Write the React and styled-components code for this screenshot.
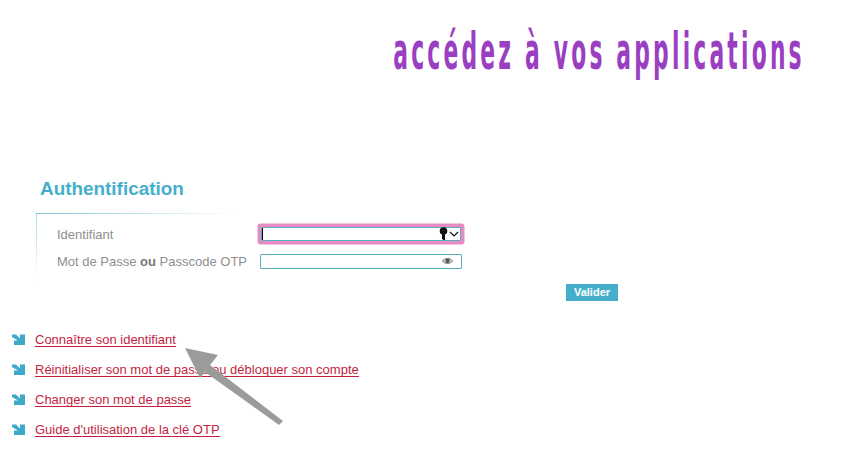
import React from 'react';
import styled, { createGlobalStyle } from 'styled-components';

const Global = createGlobalStyle`
  html, body { margin: 0; padding: 0; background: #fff; }
  body { font-family: "Liberation Sans", Arial, sans-serif; }
`;
const Page = styled.div`
  position: relative;
  width: 842px;
  height: 463px;
  overflow: hidden;
  background: #fff;
`;
const Header = styled.header`
  height: 177px;
  display: flex;
  justify-content: flex-end;
  padding: 21px 37px 0 0;
  box-sizing: border-box;
`;
const Title = styled.h1`
  margin: 0;
  height: 60px;
  font: 700 52px/60px "DejaVu Sans", sans-serif;
  color: #9a3fc2;
  white-space: nowrap;
  letter-spacing: 7.6px;
  transform: scaleX(0.42);
  transform-origin: right center;
`;
const Heading = styled.h2`
  margin: 0 0 12px 40px;
  font: 700 18.9px/24px "Liberation Sans", Arial, sans-serif;
  color: #45afcb;
`;
const FormPanel = styled.form`
  margin-left: 36px;
  width: 582px;
  height: 88px;
  padding: 11px 0 0 21px;
  box-sizing: border-box;
  background:
    linear-gradient(90deg, #7cc5d8, #ffffff 200px) top left / 200px 1px no-repeat,
    linear-gradient(180deg, #a9dbe6, #ffffff 68px) top left / 1px 68px no-repeat;
  display: flex;
  flex-direction: column;
`;
const Row = styled.div`
  display: grid;
  grid-template-columns: 203px 202px;
  align-items: center;
  height: 20px;
  margin-bottom: 7px;
`;
const Label = styled.label`
  font-size: 13px;
  line-height: 16px;
  padding-top: 1px;
  color: #8f8f8f;
  white-space: nowrap;
  b { color: #777; }
`;
const Field = styled.div`
  width: ${p => (p.$focused ? '200px' : '202px')};
  height: ${p => (p.$focused ? '14px' : '15px')};
  margin-left: ${p => (p.$focused ? '1px' : '0')};
  box-sizing: border-box;
  border: 1px solid #5aacc2;
  display: flex;
  align-items: center;
  justify-content: flex-end;
  gap: 1px;
  padding-right: ${p => (p.$focused ? '1px' : '8px')};
  background: #fff;
  position: relative;
  box-shadow: ${p => (p.$focused ? '0 0 0 3.5px #e58cc2' : 'none')};
  border-radius: 1px;
`;
const Caret = styled.span`
  position: absolute;
  left: 0;
  top: 0;
  width: 1px;
  height: 12px;
  background: #000;
`;
const Actions = styled.div`
  display: flex;
  justify-content: flex-end;
  margin-top: 6px;
`;
const Submit = styled.button`
  width: 52px;
  height: 17px;
  padding: 0;
  border: 0;
  background: #45afcb;
  color: #fff;
  font: 700 11px/17px "Liberation Sans", Arial, sans-serif;
`;
const LinkList = styled.ul`
  list-style: none;
  margin: 30px 0 0 12px;
  padding: 0;
  display: flex;
  flex-direction: column;
  gap: 13px;
`;
const LinkItem = styled.li`
  display: flex;
  align-items: center;
  gap: 10px;
  height: 17px;
`;
const LinkText = styled.a`
  font-size: 13px;
  line-height: 13px;
  color: #c41f3f;
  text-decoration: none;
  border-bottom: 1px solid #c41f3f;
  white-space: nowrap;
`;
const Pointer = styled.svg`
  position: absolute;
  left: 170px;
  top: 335px;
  width: 125px;
  height: 100px;
`;

const Corner = () => (
  <svg width="13" height="12" viewBox="0 0 13 12" aria-hidden="true">
    <path d="M0 0.5 H4 L8 4.5 V0.5 H13 V11 H2 V6.5 H6 L0 3 Z" fill="#3fa9c9" />
  </svg>
);
const Key = () => (
  <svg width="9" height="14" viewBox="0 0 9 14" aria-hidden="true">
    <circle cx="4.5" cy="4" r="3.8" fill="#111" />
    <path d="M3 6 H6 V13 H4.2 L3 11.5 Z" fill="#111" />
  </svg>
);
const Chevron = () => (
  <svg width="10" height="8" viewBox="0 0 10 8" aria-hidden="true">
    <path d="M1 2 L5 6 L9 2" fill="none" stroke="#111" strokeWidth="1.2" />
  </svg>
);
const Eye = () => (
  <svg width="11" height="8" viewBox="0 0 11 8" aria-hidden="true">
    <path d="M0.5 4 C2.5 0.8 8.5 0.8 10.5 4 C8.5 7.2 2.5 7.2 0.5 4 Z" fill="#ddd" stroke="#666" strokeWidth="0.9" />
    <circle cx="5.5" cy="3.8" r="2.2" fill="#555" />
  </svg>
);

const links = [
  'Connaître son identifiant',
  'Réinitialiser son mot de passe ou débloquer son compte',
  'Changer son mot de passe',
  "Guide d'utilisation de la clé OTP",
];

export default function App() {
  return (
    <Page>
      <Global />
      <Header>
        <Title>accédez à vos applications</Title>
      </Header>
      <Heading>Authentification</Heading>
      <FormPanel>
        <Row>
          <Label>Identifiant</Label>
          <Field $focused>
            <Caret />
            <Key />
            <Chevron />
          </Field>
        </Row>
        <Row>
          <Label>Mot de Passe <b>ou</b> Passcode OTP</Label>
          <Field>
            <Eye />
          </Field>
        </Row>
        <Actions>
          <Submit type="button">Valider</Submit>
        </Actions>
      </FormPanel>
      <LinkList>
        {links.map(l => (
          <LinkItem key={l}>
            <Corner />
            <LinkText href="#">{l}</LinkText>
          </LinkItem>
        ))}
      </LinkList>
      <Pointer viewBox="0 0 125 100" aria-hidden="true">
        <path d="M15 13 L48 20 L40 30 L113 86 L109 90 L35 37 L30 43 Z" fill="#9b9b9b" />
      </Pointer>
    </Page>
  );
}
